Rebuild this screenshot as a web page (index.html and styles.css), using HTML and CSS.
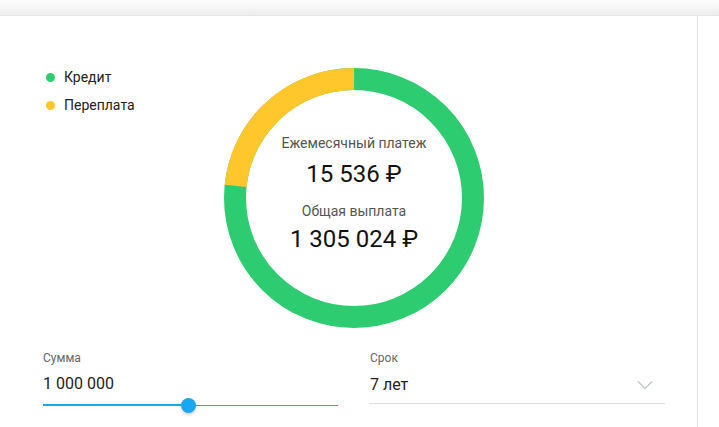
FILE: index.html
```html
<!DOCTYPE html>
<html lang="ru">
<head>
<meta charset="utf-8">
<title>Кредитный калькулятор</title>
<link rel="stylesheet" href="styles.css">
</head>
<body>
<div class="topbar"></div>
<div class="panel">
  <div class="chart-row">
    <ul class="legend">
      <li class="legend-item"><span class="dot dot-green"></span>Кредит</li>
      <li class="legend-item"><span class="dot dot-yellow"></span>Переплата</li>
    </ul>
    <div class="donut">
      <svg class="donut-svg" width="260" height="260" viewBox="0 0 260 260">
        <circle cx="130" cy="130" r="119" fill="none" stroke="#2ecc71" stroke-width="22"/>
        <circle cx="130" cy="130" r="119" fill="none" stroke="#ffc72c" stroke-width="22" stroke-dasharray="174.7 1000" transform="rotate(-174.1 130 130)"/>
      </svg>
      <div class="donut-text">
        <div class="d-label">Ежемесячный платеж</div>
        <div class="d-value d-value1">15 536 ₽</div>
        <div class="d-label d-label2">Общая выплата</div>
        <div class="d-value d-value2">1 305 024 ₽</div>
      </div>
    </div>
    <div></div>
  </div>
  <div class="fields">
    <div class="field">
      <div class="f-label">Сумма</div>
      <div class="f-value">1 000 000</div>
      <div class="slider">
        <div class="track-fill" style="width: 49.2%"></div>
        <div class="thumb"></div>
        <div class="track-rest"></div>
      </div>
    </div>
    <div class="field">
      <div class="f-label">Срок</div>
      <div class="select">
        <span class="f-value">7 лет</span>
        <svg class="chev" width="16" height="10" viewBox="0 0 16 10"><path d="M1 1.5 L8 8.5 L15 1.5" fill="none" stroke="#c3c6ce" stroke-width="1.5"/></svg>
      </div>
    </div>
  </div>
</div>
</body>
</html>
```
FILE: styles.css
```css
* { box-sizing: border-box; }
html, body { margin: 0; padding: 0; background: #fff; }
body { font-family: Roboto, "Liberation Sans", sans-serif; color: #222; width: 719px; height: 427px; overflow: hidden; }
.topbar { height: 16px; background: linear-gradient(#fefefe, #ededed); border-bottom: 1px solid #e6e6e6; }
.panel { width: 698px; height: 411px; border-right: 1px solid #e2e2e2; padding: 0 32px 0 43px; }
.chart-row { display: grid; grid-template-columns: 1fr 260px 1fr; padding-top: 46px; }
.legend { list-style: none; margin: 1px 0 0; padding: 0; align-self: start; }
.legend-item { display: flex; align-items: center; height: 28px; font-size: 14px; color: #222; margin-left: 3px; }
.dot { width: 9px; height: 9px; border-radius: 50%; margin-right: 9px; }
.dot-green { background: #2ecc71; }
.dot-yellow { background: #ffc72c; }
.donut { display: grid; margin-top: 6px; width: 260px; height: 260px; }
.donut-svg, .donut-text { grid-area: 1 / 1; }
.donut-text { display: flex; flex-direction: column; align-items: center; padding-top: 65px; }
.d-label { font-size: 14px; color: #555; line-height: 20px; }
.d-label2 { margin-top: 11px; }
.d-value { font-size: 24px; color: #111; line-height: 32px; }
.d-value1 { margin-top: 5px; }
.d-value2 { margin-top: 2px; }
.fields { display: grid; grid-template-columns: 1fr 1fr; column-gap: 32px; margin-top: 22px; }
.f-label { font-size: 12px; line-height: 16px; color: #666; }
.f-value { font-size: 16px; line-height: 24px; color: #222; display: block; margin-top: 6px; }
.slider { display: flex; align-items: center; height: 16px; margin-top: 1px; }
.track-fill { height: 2px; background: #16a9f1; }
.track-rest { flex: 1; height: 1px; background: #16a9f1; }
.thumb { width: 15px; height: 15px; border-radius: 50%; background: #16a9f1; margin: 0 -7px; position: relative; z-index: 1; box-shadow: 0 2px 3px rgba(0,0,0,0.18); flex-shrink: 0; }
.select { display: flex; align-items: center; justify-content: space-between; border-bottom: 1px solid #dcdde2; padding: 0 12px 0 1px; margin-left: -1px; height: 38px; }
.select .f-value { margin-top: 0; }
.chev { display: block; }
```
